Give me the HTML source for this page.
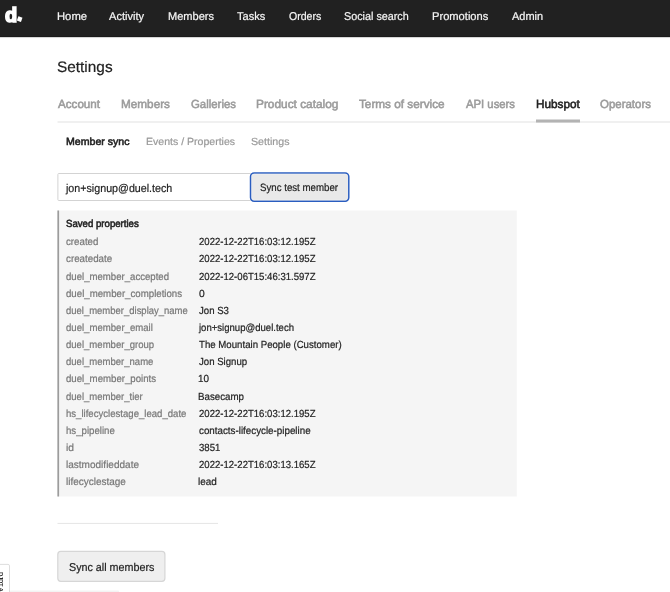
<!DOCTYPE html>
<html>
<head>
<meta charset="utf-8">
<title>Settings</title>
<style>
html,body{margin:0;padding:0;}
body{width:670px;height:592px;overflow:hidden;background:#fff;position:relative;font-family:"Liberation Sans",sans-serif;color:#222;}
#wrap{position:absolute;left:0;top:0;width:670px;height:592px;will-change:transform;}
#shapes{position:absolute;left:0;top:0;}
.t{position:absolute;white-space:nowrap;transform-origin:0 0;display:block;}
#logo{position:absolute;left:5.2px;top:2.8px;font-size:20px;line-height:24px;font-weight:bold;color:#fff;transform-origin:0 0;transform:scaleX(0.99);white-space:nowrap;-webkit-text-stroke:1.7px #fff;}
#logodot{position:absolute;left:14.4px;top:-5.9px;font-size:30px;line-height:34px;font-weight:bold;color:#fff;transform-origin:50% 85%;transform:rotate(20deg);white-space:nowrap;}
#side{position:absolute;left:0;top:565px;width:9px;height:27px;overflow:hidden;}
#side span{position:absolute;left:-3.3px;top:6.5px;font-size:6px;line-height:7px;color:#2a2a2a;font-weight:bold;writing-mode:vertical-rl;white-space:nowrap;letter-spacing:-0.3px;}
</style>
</head>
<body>
<div id="wrap">
<svg id="shapes" width="670" height="592" viewBox="0 0 670 592">
  <defs>
    <linearGradient id="navsh" x1="0" y1="0" x2="0" y2="1"><stop offset="0" stop-color="#000" stop-opacity="0.26"/><stop offset="1" stop-color="#000" stop-opacity="0"/></linearGradient>
    <linearGradient id="botsh" x1="0" y1="0" x2="0" y2="1"><stop offset="0" stop-color="#000" stop-opacity="0"/><stop offset="1" stop-color="#000" stop-opacity="0.09"/></linearGradient>
  </defs>
  <!-- top navigation bar -->
  <rect x="0" y="36.8" width="670" height="1.8" fill="url(#navsh)"/>
  <rect x="0" y="0" width="670" height="36.95" fill="#0f0f0f"/>
  <rect x="0" y="0" width="670" height="36.15" fill="#212121"/>
  <!-- tabs underline -->
  <rect x="57.5" y="121.5" width="612.5" height="1" fill="#e1e1e1"/>
  <rect x="536" y="119.5" width="44" height="3" fill="#b3b3b3"/>
  <!-- email input -->
  <rect x="57.9" y="173.5" width="193" height="27" rx="0.8" fill="#fff" stroke="#d3d3d3" stroke-width="1"/>
  <!-- focused button -->
  <rect x="250.55" y="172.95" width="98.2" height="28.2" rx="3.6" fill="#e9e9e9" stroke="#2a5dc0" stroke-width="1.55"/>
  <rect x="251.6" y="174" width="96.1" height="26.1" rx="2.6" fill="none" stroke="#fff" stroke-opacity="0.55" stroke-width="0.5"/>
  <!-- saved properties panel -->
  <rect x="57.4" y="210.5" width="459.4" height="286" fill="#f5f5f5"/>
  <rect x="57.4" y="210.5" width="1.7" height="286" fill="#9c9c9c"/>
  <!-- rule -->
  <rect x="57.5" y="522.9" width="160.5" height="1" fill="#e5e5e5"/>
  <!-- sync all button -->
  <rect x="57.8" y="551.4" width="107.1" height="29.9" rx="3" fill="#efefef" stroke="#d6d6d6" stroke-width="1.2"/>
  <!-- debug handle -->
  <rect x="-2" y="564.4" width="11.5" height="32" rx="1.5" fill="#fff" stroke="#d9d9d9" stroke-width="0.9"/>
  <rect x="10" y="589.4" width="109" height="4" rx="3" fill="url(#botsh)"/>
</svg>
<div id="nav"><span id="logo">d</span><span id="logodot">.</span></div>
<div id="side"><span>DJDT A</span></div>
<span class="t" style="left:56.50px;top:8.90px;font-size:11.3px;line-height:14px;color:#f6f6f6;transform:scaleX(0.9965) rotate(0.03deg);-webkit-text-stroke:0.2px #f6f6f6;">Home</span>
<span class="t" style="left:109.40px;top:8.90px;font-size:11.3px;line-height:14px;color:#f6f6f6;transform:scaleX(0.9804) rotate(0.03deg);-webkit-text-stroke:0.2px #f6f6f6;">Activity</span>
<span class="t" style="left:167.72px;top:8.90px;font-size:11.3px;line-height:14px;color:#f6f6f6;transform:scaleX(0.9782) rotate(0.03deg);-webkit-text-stroke:0.2px #f6f6f6;">Members</span>
<span class="t" style="left:237.40px;top:8.90px;font-size:11.3px;line-height:14px;color:#f6f6f6;transform:scaleX(0.9753) rotate(0.03deg);-webkit-text-stroke:0.2px #f6f6f6;">Tasks</span>
<span class="t" style="left:288.53px;top:8.90px;font-size:11.3px;line-height:14px;color:#f6f6f6;transform:scaleX(0.9345) rotate(0.03deg);-webkit-text-stroke:0.2px #f6f6f6;">Orders</span>
<span class="t" style="left:343.92px;top:8.90px;font-size:11.3px;line-height:14px;color:#f6f6f6;transform:scaleX(0.9550) rotate(0.03deg);-webkit-text-stroke:0.2px #f6f6f6;">Social search</span>
<span class="t" style="left:431.51px;top:8.90px;font-size:11.3px;line-height:14px;color:#f6f6f6;transform:scaleX(0.9857) rotate(0.03deg);-webkit-text-stroke:0.2px #f6f6f6;">Promotions</span>
<span class="t" style="left:511.60px;top:8.90px;font-size:11.3px;line-height:14px;color:#f6f6f6;transform:scaleX(0.9712) rotate(0.03deg);-webkit-text-stroke:0.2px #f6f6f6;">Admin</span>
<span class="t" style="left:56.89px;top:57.20px;font-size:15.2px;line-height:19px;color:#222;transform:scaleX(1.0130) rotate(0.03deg);-webkit-text-stroke:0.2px #222;">Settings</span>
<span class="t" style="left:57.80px;top:95.80px;font-size:11.8px;line-height:16px;color:#9b9b9b;transform:scaleX(0.9859) rotate(0.03deg);-webkit-text-stroke:0.55px #9b9b9b;">Account</span>
<span class="t" style="left:120.80px;top:95.80px;font-size:11.8px;line-height:16px;color:#9b9b9b;transform:scaleX(0.9958) rotate(0.03deg);-webkit-text-stroke:0.55px #9b9b9b;">Members</span>
<span class="t" style="left:190.62px;top:95.80px;font-size:11.8px;line-height:16px;color:#9b9b9b;transform:scaleX(0.9670) rotate(0.03deg);-webkit-text-stroke:0.55px #9b9b9b;">Galleries</span>
<span class="t" style="left:256.20px;top:95.80px;font-size:11.8px;line-height:16px;color:#9b9b9b;transform:scaleX(1.0050) rotate(0.03deg);-webkit-text-stroke:0.55px #9b9b9b;">Product catalog</span>
<span class="t" style="left:359.30px;top:95.80px;font-size:11.8px;line-height:16px;color:#9b9b9b;transform:scaleX(0.9965) rotate(0.03deg);-webkit-text-stroke:0.55px #9b9b9b;">Terms of service</span>
<span class="t" style="left:466.20px;top:95.80px;font-size:11.8px;line-height:16px;color:#9b9b9b;transform:scaleX(0.9586) rotate(0.03deg);-webkit-text-stroke:0.55px #9b9b9b;">API users</span>
<span class="t" style="left:535.60px;top:95.80px;font-size:11.8px;line-height:16px;color:#222;transform:scaleX(0.9977) rotate(0.03deg);-webkit-text-stroke:0.55px #222;">Hubspot</span>
<span class="t" style="left:600.22px;top:95.80px;font-size:11.8px;line-height:16px;color:#9b9b9b;transform:scaleX(0.9709) rotate(0.03deg);-webkit-text-stroke:0.55px #9b9b9b;">Operators</span>
<span class="t" style="left:65.79px;top:134.50px;font-size:10.4px;line-height:13px;color:#222;transform:scaleX(1.0179) rotate(0.03deg);-webkit-text-stroke:0.55px #222;">Member sync</span>
<span class="t" style="left:145.69px;top:134.50px;font-size:10.4px;line-height:13px;color:#999;transform:scaleX(1.0150) rotate(0.03deg);-webkit-text-stroke:0.2px #999;">Events / Properties</span>
<span class="t" style="left:251.29px;top:134.50px;font-size:10.4px;line-height:13px;color:#999;transform:scaleX(1.0245) rotate(0.03deg);-webkit-text-stroke:0.2px #999;">Settings</span>
<span class="t" style="left:65.88px;top:180.60px;font-size:11.4px;line-height:14px;color:#222;transform:scaleX(0.9389) rotate(0.03deg);-webkit-text-stroke:0.2px #222;">jon+signup@duel.tech</span>
<span class="t" style="left:260.14px;top:180.20px;font-size:10.6px;line-height:14px;color:#222;transform:scaleX(0.9138) rotate(0.03deg);-webkit-text-stroke:0.2px #222;">Sync test member</span>
<span class="t" style="left:66.33px;top:217.20px;font-size:10.3px;line-height:13px;color:#222;transform:scaleX(0.9351) rotate(0.03deg);-webkit-text-stroke:0.55px #222;">Saved properties</span>
<span class="t" style="left:66.22px;top:235.30px;font-size:10.3px;line-height:13px;color:#777777;transform:scaleX(0.9429) rotate(0.03deg);-webkit-text-stroke:0.2px #777777;">created</span>
<span class="t" style="left:198.64px;top:235.30px;font-size:10.3px;line-height:13px;color:#222;transform:scaleX(0.9294) rotate(0.03deg);-webkit-text-stroke:0.2px #222;">2022-12-22T16:03:12.195Z</span>
<span class="t" style="left:66.22px;top:252.44px;font-size:10.3px;line-height:13px;color:#777777;transform:scaleX(0.9498) rotate(0.03deg);-webkit-text-stroke:0.2px #777777;">createdate</span>
<span class="t" style="left:198.64px;top:252.44px;font-size:10.3px;line-height:13px;color:#222;transform:scaleX(0.9294) rotate(0.03deg);-webkit-text-stroke:0.2px #222;">2022-12-22T16:03:12.195Z</span>
<span class="t" style="left:66.23px;top:269.58px;font-size:10.3px;line-height:13px;color:#777777;transform:scaleX(0.9324) rotate(0.03deg);-webkit-text-stroke:0.2px #777777;">duel_member_accepted</span>
<span class="t" style="left:198.64px;top:269.58px;font-size:10.3px;line-height:13px;color:#222;transform:scaleX(0.9294) rotate(0.03deg);-webkit-text-stroke:0.2px #222;">2022-12-06T15:46:31.597Z</span>
<span class="t" style="left:66.22px;top:286.72px;font-size:10.3px;line-height:13px;color:#777777;transform:scaleX(0.9390) rotate(0.03deg);-webkit-text-stroke:0.2px #777777;">duel_member_completions</span>
<span class="t" style="left:198.70px;top:286.72px;font-size:10.3px;line-height:13px;color:#222;transform:scaleX(1.0000) rotate(0.03deg);-webkit-text-stroke:0.2px #222;">0</span>
<span class="t" style="left:66.23px;top:303.86px;font-size:10.3px;line-height:13px;color:#777777;transform:scaleX(0.9209) rotate(0.03deg);-webkit-text-stroke:0.2px #777777;">duel_member_display_name</span>
<span class="t" style="left:198.91px;top:303.86px;font-size:10.3px;line-height:13px;color:#222;transform:scaleX(0.9331) rotate(0.03deg);-webkit-text-stroke:0.2px #222;">Jon S3</span>
<span class="t" style="left:66.23px;top:321.00px;font-size:10.3px;line-height:13px;color:#777777;transform:scaleX(0.9306) rotate(0.03deg);-webkit-text-stroke:0.2px #777777;">duel_member_email</span>
<span class="t" style="left:199.38px;top:321.00px;font-size:10.3px;line-height:13px;color:#222;transform:scaleX(0.9284) rotate(0.03deg);-webkit-text-stroke:0.2px #222;">jon+signup@duel.tech</span>
<span class="t" style="left:66.23px;top:338.14px;font-size:10.3px;line-height:13px;color:#777777;transform:scaleX(0.9278) rotate(0.03deg);-webkit-text-stroke:0.2px #777777;">duel_member_group</span>
<span class="t" style="left:198.91px;top:338.14px;font-size:10.3px;line-height:13px;color:#222;transform:scaleX(0.9373) rotate(0.03deg);-webkit-text-stroke:0.2px #222;">The Mountain People (Customer)</span>
<span class="t" style="left:66.23px;top:355.28px;font-size:10.3px;line-height:13px;color:#777777;transform:scaleX(0.9252) rotate(0.03deg);-webkit-text-stroke:0.2px #777777;">duel_member_name</span>
<span class="t" style="left:198.91px;top:355.28px;font-size:10.3px;line-height:13px;color:#222;transform:scaleX(0.9352) rotate(0.03deg);-webkit-text-stroke:0.2px #222;">Jon Signup</span>
<span class="t" style="left:66.23px;top:372.42px;font-size:10.3px;line-height:13px;color:#777777;transform:scaleX(0.9371) rotate(0.03deg);-webkit-text-stroke:0.2px #777777;">duel_member_points</span>
<span class="t" style="left:198.33px;top:372.42px;font-size:10.3px;line-height:13px;color:#222;transform:scaleX(0.9612) rotate(0.03deg);-webkit-text-stroke:0.2px #222;">10</span>
<span class="t" style="left:66.23px;top:389.56px;font-size:10.3px;line-height:13px;color:#777777;transform:scaleX(0.9248) rotate(0.03deg);-webkit-text-stroke:0.2px #777777;">duel_member_tier</span>
<span class="t" style="left:198.34px;top:389.56px;font-size:10.3px;line-height:13px;color:#222;transform:scaleX(0.9451) rotate(0.03deg);-webkit-text-stroke:0.2px #222;">Basecamp</span>
<span class="t" style="left:65.95px;top:406.70px;font-size:10.3px;line-height:13px;color:#777777;transform:scaleX(0.9306) rotate(0.03deg);-webkit-text-stroke:0.2px #777777;">hs_lifecyclestage_lead_date</span>
<span class="t" style="left:198.64px;top:406.70px;font-size:10.3px;line-height:13px;color:#222;transform:scaleX(0.9294) rotate(0.03deg);-webkit-text-stroke:0.2px #222;">2022-12-22T16:03:12.195Z</span>
<span class="t" style="left:65.94px;top:423.84px;font-size:10.3px;line-height:13px;color:#777777;transform:scaleX(0.9373) rotate(0.03deg);-webkit-text-stroke:0.2px #777777;">hs_pipeline</span>
<span class="t" style="left:198.72px;top:423.84px;font-size:10.3px;line-height:13px;color:#222;transform:scaleX(0.9511) rotate(0.03deg);-webkit-text-stroke:0.2px #222;">contacts-lifecycle-pipeline</span>
<span class="t" style="left:65.90px;top:440.98px;font-size:10.3px;line-height:13px;color:#777777;transform:scaleX(1.0000) rotate(0.03deg);-webkit-text-stroke:0.2px #777777;">id</span>
<span class="t" style="left:198.73px;top:440.98px;font-size:10.3px;line-height:13px;color:#222;transform:scaleX(0.9318) rotate(0.03deg);-webkit-text-stroke:0.2px #222;">3851</span>
<span class="t" style="left:65.92px;top:458.12px;font-size:10.3px;line-height:13px;color:#777777;transform:scaleX(0.9743) rotate(0.03deg);-webkit-text-stroke:0.2px #777777;">lastmodifieddate</span>
<span class="t" style="left:198.64px;top:458.12px;font-size:10.3px;line-height:13px;color:#222;transform:scaleX(0.9294) rotate(0.03deg);-webkit-text-stroke:0.2px #222;">2022-12-22T16:03:13.165Z</span>
<span class="t" style="left:65.92px;top:475.26px;font-size:10.3px;line-height:13px;color:#777777;transform:scaleX(0.9687) rotate(0.03deg);-webkit-text-stroke:0.2px #777777;">lifecyclestage</span>
<span class="t" style="left:198.42px;top:475.26px;font-size:10.3px;line-height:13px;color:#222;transform:scaleX(0.9669) rotate(0.03deg);-webkit-text-stroke:0.2px #222;">lead</span>
<span class="t" style="left:68.53px;top:559.80px;font-size:11.4px;line-height:14px;color:#222;transform:scaleX(0.9431) rotate(0.03deg);-webkit-text-stroke:0.2px #222;">Sync all members</span>
</div>
</body>
</html>
